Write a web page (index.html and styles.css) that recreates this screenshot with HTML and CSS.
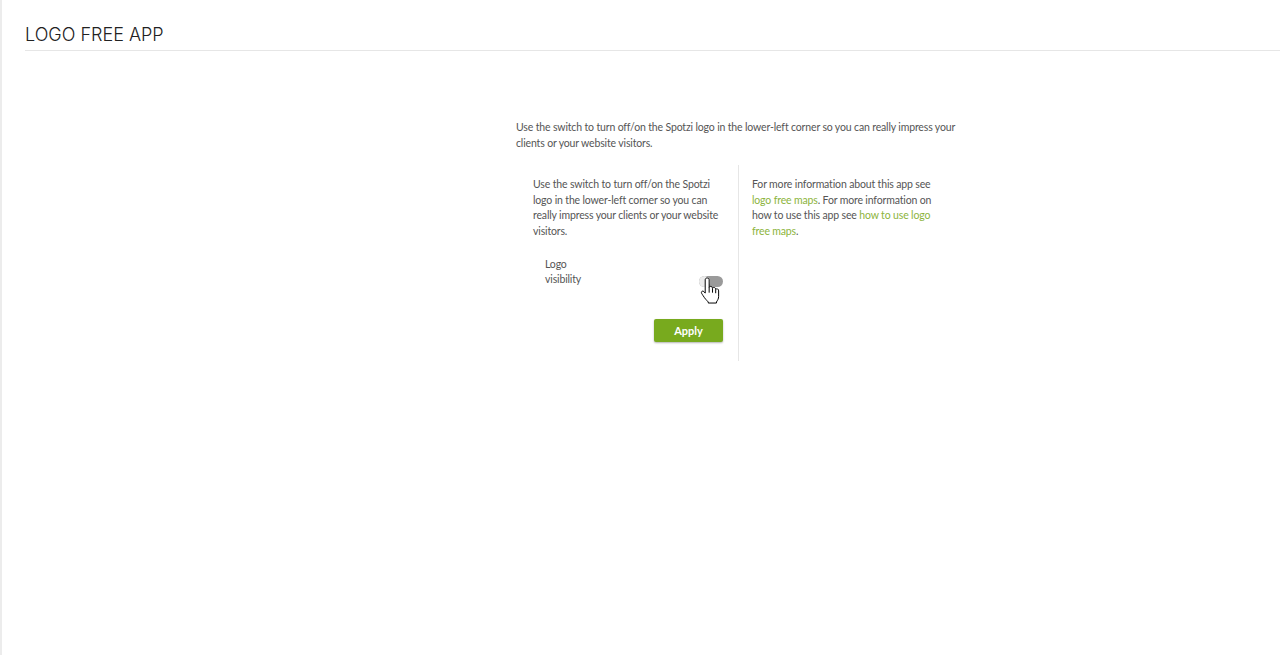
FILE: index.html
```html
<!DOCTYPE html>
<html>
<head>
<meta charset="utf-8">
<link rel="stylesheet" href="styles.css">
</head>
<body>
<div class="page">
  <header class="header">
    <h1 class="title">LOGO FREE APP</h1>
  </header>
  <main class="content">
    <p class="intro">Use the switch to turn off/on the Spotzi logo in the lower-left corner so you can really impress your clients or your website visitors.</p>
    <div class="row">
      <div class="col-left">
        <p class="text">Use the switch to turn off/on the Spotzi logo in the lower-left corner so you can really impress your clients or your website visitors.</p>
        <div class="setting">
          <span class="label">Logo<br>visibility</span>
          <span class="toggle">
            <span class="knob"></span>
            <svg class="cursor" width="24" height="29" viewBox="0 0 22 26">
              <path d="M7.5 1.5 C8.8 1.5 9.3 2.3 9.3 3.3 V10.2 C9.6 9.4 10.4 9.1 11.2 9.3 C12 9.5 12.4 10.2 12.4 11 C12.7 10.3 13.5 10.1 14.2 10.3 C15 10.5 15.3 11.2 15.3 12 C15.7 11.4 16.5 11.3 17.1 11.6 C17.8 12 18 12.6 18 13.4 V18.5 C18 20.5 17 22 16 23.5 V24.5 H8.5 V23.5 C7 22 5.5 20.5 3.8 17.8 C3 16.5 2.2 15.6 2.2 14.8 C2.2 13.9 3 13.4 3.8 13.6 C4.5 13.8 5.2 14.7 5.7 15.4 V3.3 C5.7 2.3 6.3 1.5 7.5 1.5 Z" fill="#fff" stroke="#000" stroke-width="0.9"/>
              <path d="M9.3 10.2 V15 M12.4 11 V15 M15.3 12 V15.5" stroke="#000" stroke-width="0.9" fill="none"/>
            </svg>
          </span>
        </div>
        <div class="actions">
          <button class="apply">Apply</button>
        </div>
      </div>
      <div class="col-right">
        <p class="text">For more information about this app see <a href="#">logo free maps</a>. For more information on how to use this app see <a href="#">how to use logo free maps</a>.</p>
      </div>
    </div>
  </main>
</div>
</body>
</html>
```
FILE: styles.css
```css
html, body {
  margin: 0;
  padding: 0;
  background: #fff;
}
body {
  font-family: Lato, "Open Sans", sans-serif;
  color: #555;
}
.page {
  min-height: 655px;
  border-left: 2px solid #ececec;
  box-sizing: border-box;
}
.header {
  margin-left: 23px;
  border-bottom: 1px solid #e6e6e6;
  height: 51px;
  box-sizing: border-box;
}
.title {
  margin: 0;
  padding-top: 25px;
  font-family: Inter, sans-serif;
  font-weight: 300;
  font-size: 18px;
  line-height: 20px;
  color: #222;
}
.content {
  width: 450px;
  margin-left: 514px;
  padding-top: 69px;
}
.intro,
.text,
.label {
  margin: 0;
  font-size: 10.5px;
  line-height: 15.6px;
  letter-spacing: -0.15px;
}
.row {
  display: flex;
  margin-top: 14px;
}
.col-left {
  width: 190px;
  padding: 12px 15px 19px 17px;
  border-right: 1px solid #e6e6e6;
}
.col-right {
  width: 192px;
  padding: 12px 0 0 13px;
}
.text a {
  color: #8cb43c;
  text-decoration: none;
}
.setting {
  display: flex;
  justify-content: space-between;
  align-items: flex-start;
  margin-top: 17px;
  padding-left: 12px;
}
.toggle {
  position: relative;
  width: 24px;
  height: 11px;
  border-radius: 6px;
  background: #9a9a9a;
  margin-top: 19px;
}
.knob {
  position: absolute;
  left: 0;
  top: 0;
  width: 11px;
  height: 11px;
  border-radius: 50%;
  background: #ececec;
}
.cursor {
  position: absolute;
  left: 0;
  top: 0;
}
.actions {
  display: flex;
  justify-content: flex-end;
  margin-top: 31px;
}
.apply {
  width: 69px;
  height: 23px;
  border: none;
  border-radius: 2px;
  background: #78aa1e;
  color: #fff;
  font-family: Lato, "Open Sans", sans-serif;
  font-size: 11px;
  font-weight: 700;
  box-shadow: 0 1px 2px rgba(0,0,0,0.3);
  cursor: pointer;
}
```
